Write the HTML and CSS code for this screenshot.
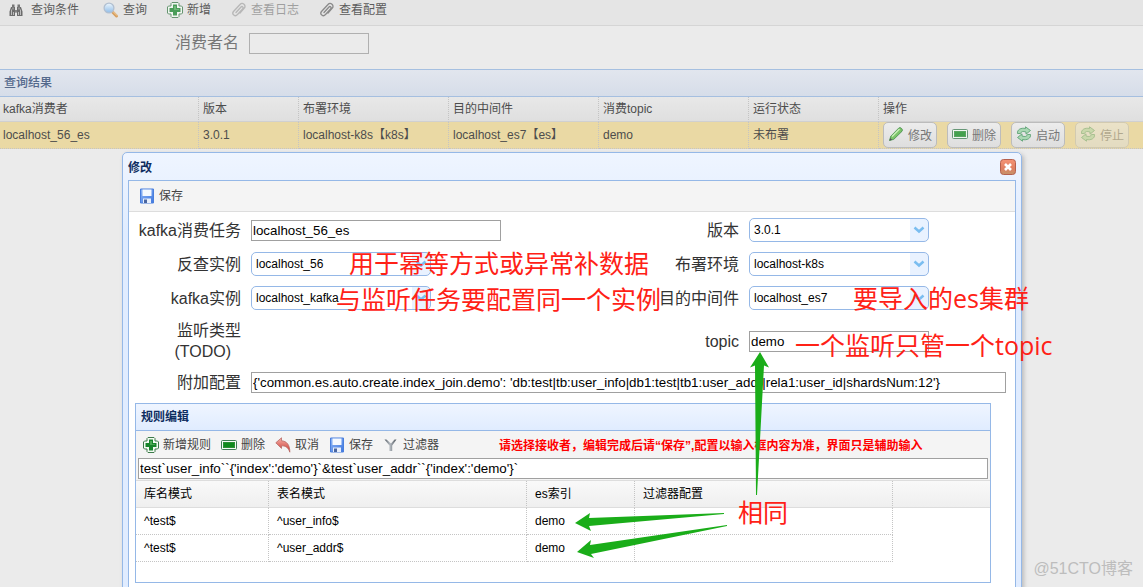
FILE: index.html
```html
<!DOCTYPE html>
<html lang="zh-CN">
<head>
<meta charset="utf-8">
<title>kafka消费者</title>
<link rel="stylesheet" href="styles.css">
</head>
<body>
<svg class="defs" aria-hidden="true">
  <defs>
    <linearGradient id="lens" x1="0" y1="0" x2="0" y2="1"><stop offset="0" stop-color="#eef7fd"/><stop offset="1" stop-color="#8fbce8"/></linearGradient>
    <linearGradient id="disk" x1="0" y1="0" x2="1" y2="1"><stop offset="0" stop-color="#8fb6f6"/><stop offset="1" stop-color="#3f78e0"/></linearGradient>
    <linearGradient id="undo" x1="0" y1="0" x2="0" y2="1"><stop offset="0" stop-color="#f6b3ab"/><stop offset="1" stop-color="#c9332b"/></linearGradient>
    <linearGradient id="close" x1="0" y1="0" x2="0" y2="1"><stop offset="0" stop-color="#f59476"/><stop offset=".6" stop-color="#e08062"/><stop offset="1" stop-color="#c4946a"/></linearGradient>
    <linearGradient id="funnel" x1="0" y1="0" x2="1" y2="0"><stop offset="0" stop-color="#555d64"/><stop offset=".45" stop-color="#b4bac0"/><stop offset="1" stop-color="#50575e"/></linearGradient>
    <symbol id="i-find" viewBox="0 0 16 16">
      <path d="M4 2.500h2.500V5H4zM9.500 2.500H12V5H9.500z" fill="#777"/><path d="M3 5h4v3h2V5h4l1.500 4.500V14H9v-3.500H7V14H1.500V9.500z" fill="#6c6c6c"/><path d="M3.500 7.500v5.500M5.500 10v3M10.500 10v3M12.500 7.500v5.500M5 5.500v2M11 5.500v2" stroke="#bdbdbd"/><path d="M7 9h2" stroke="#999"/>
    </symbol>
    <symbol id="i-search" viewBox="0 0 16 16">
      <path d="M10 10.500l3.500 3.500" stroke="#d8a060" stroke-width="3" stroke-linecap="round"/><path d="M10.500 10l3.500 3.500" stroke="#f3d3a4" stroke-linecap="round"/><circle cx="6" cy="6" r="4.900" fill="url(#lens)" stroke="#b1bfd0" stroke-width="1.300"/>
    </symbol>
    <symbol id="i-add" viewBox="0 0 16 16">
      <path d="M5 .5h6l1 1V4h2.500l1 1v6l-1 1H12v2.500l-1 1H5l-1-1V12H1.500l-1-1V5l1-1H4V1.500z" fill="#f4faf4" stroke="#3c7a4a"/><path d="M6 2.500h4V6h3.500v4H10v3.500H6V10H2.500V6H6z" fill="#17852b"/><path d="M7 4h2v3h3v1H7z" fill="#4aa955"/>
    </symbol>
    <symbol id="i-remove" viewBox="0 0 16 16">
      <rect x=".5" y="3.500" width="15" height="9" rx="1" fill="#f6fbf6" stroke="#3d7d52"/><rect x="2.500" y="5.500" width="11" height="5" fill="#0f8a1c" stroke="#2b8f35"/>
    </symbol>
    <symbol id="i-clip" viewBox="0 0 16 16">
      <path d="M5 10.500L10 5a1.200 1.200 0 0 1 1.800 1.700L6.300 12.700a2.400 2.400 0 0 1-3.800-3.200l6.500-7a2.800 2.800 0 0 1 4.300 3.700L9 11" fill="none" stroke="#8a8a8a" stroke-width="1.300" stroke-linecap="round"/>
    </symbol>
    <symbol id="i-edit" viewBox="0 0 16 16">
      <path d="M1.500 14.500l1.300-4.300 8-8.200q1.300-1 2.800.5t.4 2.800l-8.200 8z" fill="#7cc46a" stroke="#4c9152" stroke-width=".9"/><path d="M4 10.500l7.500-7.500" stroke="#c9efb8" stroke-width="1.500"/><path d="M1.500 14.500l.8-2.600 1.800 1.800z" fill="#555"/>
    </symbol>
    <symbol id="i-reload" viewBox="0 0 16 16">
      <path d="M1.500 7.500C1 3.500 5 1.500 9.500 2.500V.8L14.500 4.500 10 8.200V6C7 5 5 5.500 4.500 7.500z" fill="#a9d8b3" stroke="#5fa376" stroke-width=".9" stroke-linejoin="round"/>
      <path d="M14.500 8.500C15 12.500 11 14.500 6.500 13.500v1.700L1.500 11.500 6 7.800V10C9 11 11 10.500 11.500 8.500z" fill="#a9d8b3" stroke="#5fa376" stroke-width=".9" stroke-linejoin="round"/>
    </symbol>
    <symbol id="i-save" viewBox="0 0 16 16">
      <path d="M1.500 1h13v14h-13z" fill="url(#disk)" stroke="#4a7fdc"/><path d="M3.500 1.500h9V8h-9z" fill="#f5f9fe"/><path d="M4 10.500h8V15H4z" fill="#e8effb"/><path d="M5 11.500h3V15H5z" fill="#4a66a0"/>
    </symbol>
    <symbol id="i-undo" viewBox="0 0 16 16">
      <path d="M.8 5.800L6.500.8v3c5 .2 8.500 4 8.300 11.400C13.500 11 11 8.800 6.500 8.800v2.600z" fill="url(#undo)" stroke="#b86a66" stroke-width=".8" stroke-linejoin="round"/>
    </symbol>
    <symbol id="i-filter" viewBox="0 0 16 16">
      <path d="M1.500 2.500h2L8 6.500 11.500 2.500h2L9.200 8.500V14H6.500V8.500z" fill="url(#funnel)"/>
    </symbol>
    <symbol id="i-close" viewBox="0 0 16 16">
      <rect x=".5" y=".5" width="15" height="15" rx="3" fill="url(#close)" stroke="#b5604e"/><path d="M5 5l6 6M11 5l-6 6" stroke="#fff" stroke-width="2.600"/>
    </symbol>
    <symbol id="i-down" viewBox="0 0 12 8"><path d="M1.500 1.500L6 5.500l4.500-4" fill="none" stroke="#7abdf0" stroke-width="2.500"/></symbol>
  </defs>
</svg>

<main class="page">
  <div class="toolbar page-tools">
    <button class="tool tool-first"><svg class="icon"><use href="#i-find"/></svg>查询条件</button>
    <button class="tool"><svg class="icon"><use href="#i-search"/></svg>查询</button>
    <button class="tool"><svg class="icon faded"><use href="#i-add"/></svg>新增</button>
    <button class="tool" disabled><svg class="icon"><use href="#i-clip"/></svg>查看日志</button>
    <button class="tool"><svg class="icon"><use href="#i-clip"/></svg>查看配置</button>
  </div>
  <form class="search">
    <label for="consumer">消费者名</label>
    <input id="consumer" class="text-box" type="text">
  </form>
  <h2 class="results-title">查询结果</h2>
  <table class="results">
    <colgroup><col class="c-name"><col class="c-ver"><col class="c-mid"><col class="c-mid"><col class="c-mid"><col class="c-state"><col></colgroup>
    <thead><tr><th>kafka消费者</th><th>版本</th><th>布署环境</th><th>目的中间件</th><th>消费topic</th><th>运行状态</th><th>操作</th></tr></thead>
    <tbody><tr><td>localhost_56_es</td><td>3.0.1</td><td>localhost-k8s【k8s】</td><td>localhost_es7【es】</td><td>demo</td><td>未布署</td>
      <td><div class="actions">
        <button class="action"><svg class="icon"><use href="#i-edit"/></svg>修改</button>
        <button class="action"><svg class="icon faded"><use href="#i-remove"/></svg>删除</button>
        <button class="action"><svg class="icon"><use href="#i-reload"/></svg>启动</button>
        <button class="action" disabled><svg class="icon"><use href="#i-reload"/></svg>停止</button>
      </div></td></tr></tbody>
  </table>

  <section class="dialog" role="dialog" aria-labelledby="dialog-title">
    <header class="dialog-head"><h2 id="dialog-title">修改</h2><button class="close" aria-label="关闭"><svg class="icon"><use href="#i-close"/></svg></button></header>
    <div class="dialog-body">
      <div class="toolbar dialog-tools"><button class="tool"><svg class="icon"><use href="#i-save"/></svg>保存</button></div>
      <form class="fields">
        <label for="task">kafka消费任务</label>
        <input id="task" class="text-box w-task" type="text" value="localhost_56_es">
        <label for="version">版本</label>
        <div class="combo"><select id="version"><option>3.0.1</option></select><svg class="down"><use href="#i-down"/></svg></div>

        <label for="lookup">反查实例</label>
        <div class="combo"><select id="lookup"><option>localhost_56</option></select><svg class="down"><use href="#i-down"/></svg></div>
        <label for="env">布署环境</label>
        <div class="combo"><select id="env"><option>localhost-k8s</option></select><svg class="down"><use href="#i-down"/></svg></div>

        <label for="kafka">kafka实例</label>
        <div class="combo"><select id="kafka"><option>localhost_kafka</option></select><svg class="down"><use href="#i-down"/></svg></div>
        <label for="target">目的中间件</label>
        <div class="combo"><select id="target"><option>localhost_es7</option></select><svg class="down"><use href="#i-down"/></svg></div>

        <div class="kind">监听类型<span class="todo">(TODO)</span></div>
        <label class="topic-label" for="topic">topic</label>
        <input id="topic" class="text-box w-topic" type="text" value="demo">

        <label for="extra">附加配置</label>
        <input id="extra" class="text-box w-extra" type="text" value="{'common.es.auto.create.index_join.demo': 'db:test|tb:user_info|db1:test|tb1:user_addr|rela1:user_id|shardsNum:12'}">
      </form>

      <section class="rules">
        <h3>规则编辑</h3>
        <div class="rules-tools">
          <div class="toolbar rules-buttons">
            <button class="tool"><svg class="icon"><use href="#i-add"/></svg>新增规则</button>
            <button class="tool"><svg class="icon"><use href="#i-remove"/></svg>删除</button>
            <button class="tool"><svg class="icon"><use href="#i-undo"/></svg>取消</button>
            <button class="tool"><svg class="icon"><use href="#i-save"/></svg>保存</button>
            <button class="tool"><svg class="icon"><use href="#i-filter"/></svg>过滤器</button>
            <strong class="hint">请选择接收者，编辑完成后请“保存”,配置以输入框内容为准，界面只是辅助输入</strong>
          </div>
          <input class="text-box w-rule" type="text" aria-label="规则" value="test`user_info``{'index':'demo'}`&amp;test`user_addr``{'index':'demo'}`">
        </div>
        <table class="rule-table">
          <colgroup><col class="r-db"><col class="r-wide"><col class="r-es"><col class="r-wide"><col></colgroup>
          <thead><tr><th>库名模式</th><th>表名模式</th><th>es索引</th><th>过滤器配置</th><th class="rest"></th></tr></thead>
          <tbody>
            <tr><td>^test$</td><td>^user_info$</td><td>demo</td><td></td><td class="rest"></td></tr>
            <tr><td>^test$</td><td>^user_addr$</td><td>demo</td><td></td><td class="rest"></td></tr>
          </tbody>
        </table>
      </section>
    </div>
  </section>

  <p class="note note-lookup">用于幂等方式或异常补数据</p>
  <p class="note note-kafka">与监听任务要配置同一个实例</p>
  <p class="note note-target">要导入的es集群</p>
  <p class="note note-topic">一个监听只管一个topic</p>
  <p class="note note-same">相同</p>
  <svg class="arrows" viewBox="0 0 490 220" aria-hidden="true">
    <g fill="#1aad19">
      <path d="M190 2L199 17.500 194 15.500 187 145h-1L185 15.500 180 17.500z"/>
      <path d="M5 173L20 163 19 168 154 163v1L19 176 21 181z"/>
      <path d="M7 202L21 190 20 195 157 175v1L21 204 24 208z"/>
    </g>
  </svg>
  <span class="watermark">@51CTO博客</span>
</main>
</body>
</html>
```
FILE: styles.css
```css
* { box-sizing: border-box; }
body, h2, h3, p { margin: 0; }
body, button, input, select { font-family: "Liberation Sans", "Noto Sans CJK SC", sans-serif; }
body, button, select { font-size: 12px; }
.defs { position: absolute; width: 0; height: 0; }
.page {
  position: relative;
  height: 100vh;
  overflow: hidden;
  background: #ebebeb;
  color: #4d4d4d;
}
.icon { width: 16px; height: 16px; flex: none; }
.faded { opacity: 0.75; }

.toolbar { display: flex; align-items: center; }
.tool {
  display: flex;
  align-items: center;
  gap: 4px;
  padding: 0;
  border: 0;
  background: none;
  color: #444;
  line-height: 20px;
  white-space: nowrap;
}
.tool:disabled { opacity: 0.5; }
.page-tools {
  gap: 20px;
  padding: 0 8px 5px;
  background: #e5e5e5;
  border-bottom: 1px solid #d5d5d5;
}
.page-tools .tool { color: #5c5c5c; }
.page-tools .tool-first { gap: 7px; margin-right: 4px; }

.search {
  display: flex;
  align-items: center;
  gap: 10px;
  height: 43px;
  padding: 1px 175px 10px;
  color: #777;
}
.search label { font-size: 16px; line-height: 20px; }
.text-box {
  height: 21px;
  padding: 0 1px;
  border: 1px solid #a0a0a0;
  border-radius: 0;
  background: #fff;
  color: #000;
}
.search .text-box { width: 120px; background: transparent; border-color: #b0b0b0; }

.results-title {
  padding: 0 4px;
  border: solid #a5bfe0;
  border-width: 1px 0;
  background: linear-gradient(#e2e6ee, #d6dde9);
  color: #54698c;
  font-size: 12px;
  font-weight: 500;
  line-height: 26px;
}
table { width: 100%; table-layout: fixed; border-collapse: separate; border-spacing: 0; }
th, td { text-align: left; font-weight: 400; white-space: nowrap; }
.results th, .results td { height: 25px; padding: 0 4px; border-right: 1px dotted #c4c4c4; line-height: 20px; }
.results th:first-child, .results td:first-child { padding-left: 3px; }
.results th { background: linear-gradient(#e8e8e8, #dfdfdf); border-bottom: 1px solid #d0d0d0; }
.results td { height: 27px; background: #ead9a4; border-bottom: 1px dotted #c4c4c4; }
.results th:last-child, .results td:last-child { border-right: 0; }
.c-name { width: 199px; }
.c-ver { width: 100px; }
.c-mid { width: 150px; }
.c-state { width: 130px; }
.actions { display: flex; gap: 10px; }
.action {
  display: flex;
  align-items: center;
  gap: 4px;
  width: 54px;
  height: 26px;
  padding: 0 4px 2px;
  border: 1px solid #bcbcbc;
  border-radius: 5px;
  background: linear-gradient(#ececec, #dedede);
  color: #777;
  white-space: nowrap;
}
.action:disabled { opacity: 0.5; }

.dialog {
  position: absolute;
  top: 152px;
  left: 122px;
  right: 121px;
  padding: 0 5px 5px;
  border: 1px solid #95b8e7;
  border-radius: 5px;
  background: linear-gradient(#eff5ff, #e0ecff 80px);
  box-shadow: 2px 2px 4px #bbb;
}
.dialog-head { display: flex; align-items: center; justify-content: space-between; height: 27px; }
.dialog-head h2, .rules h3 { color: #0e2d5f; font-size: 12px; font-weight: 700; }
.close { display: flex; padding: 0; border: 0; background: none; }
.dialog-body { border: 1px solid #95b8e7; background: #fff; min-height: 450px; }
.dialog-tools { height: 31px; padding: 0 10px; background: #f4f4f4; border-bottom: 1px solid #ddd; }

.fields {
  display: grid;
  grid-template-columns: 106px 1fr 80px 257px;
  gap: 10px;
  align-items: center;
  padding: 6px 9px 10px 6px;
}
.fields label, .kind { color: #333; font-size: 16px; line-height: 21px; text-align: right; white-space: nowrap; }
.topic-label { grid-column: 3; }
.todo { display: block; padding-right: 10px; }
.w-task { width: 250px; }
.w-topic { width: 180px; }
.w-extra { grid-column: 2 / -1; }
.combo { display: grid; grid-template-columns: 1fr 19px; width: 180px; height: 24px; align-items: center; }
.combo select {
  grid-area: 1 / 1 / 2 / 3;
  height: 24px;
  padding: 0 20px 0 4px;
  border: 1px solid #95b8e7;
  border-radius: 5px;
  appearance: none;
  background: linear-gradient(90deg, #fff calc(100% - 18px), #e9f2ff 0);
  color: #000;
}
.down { grid-area: 1 / 2; width: 12px; height: 8px; margin-left: 3px; pointer-events: none; }

.rules { margin: 0 24px 0 6px; padding-bottom: 20px; border: 1px solid #95b8e7; }
.rules h3 { padding: 0 5px; border-bottom: 1px solid #95b8e7; background: linear-gradient(#eff5ff, #e0ecff); line-height: 26px; }
.rules-tools { padding: 0 2px 1px; background: #f4f4f4; border-bottom: 1px solid #ddd; }
.rules-buttons { height: 27px; gap: 10px; padding: 0 5px; }
.hint { margin-left: 50px; color: #f00; white-space: nowrap; }
.w-rule { display: block; width: 100%; }
.rule-table { color: #000; }
.rule-table th, .rule-table td { height: 27px; padding: 0 8px; border-right: 1px dotted #c4c4c4; border-bottom: 1px dotted #c4c4c4; line-height: 20px; }
.rule-table th { background: linear-gradient(#f9f9f9, #efefef); border-bottom: 1px solid #ddd; }
.rule-table .rest { border-right: 0; }
.rule-table td.rest { border-bottom: 0; }
.r-db { width: 133px; }
.r-wide { width: 258px; }
.r-es { width: 108px; }

.note {
  position: absolute;
  color: #ff2116;
  font-family: "Open Sans", "Noto Sans CJK SC", sans-serif;
  font-size: 25px;
  line-height: 30px;
  white-space: nowrap;
}
.note-lookup { left: 349px; top: 248px; }
.note-kafka { left: 336px; top: 284px; }
.note-target { left: 853px; top: 283px; }
.note-topic { left: 795px; top: 330px; }
.note-same { left: 738px; top: 497px; }
.arrows { position: absolute; left: 570px; top: 350px; width: 490px; height: 220px; pointer-events: none; }
.watermark { position: absolute; right: 10px; bottom: 8px; color: #bdbdbd; font-size: 16px; line-height: 20px; }
```
